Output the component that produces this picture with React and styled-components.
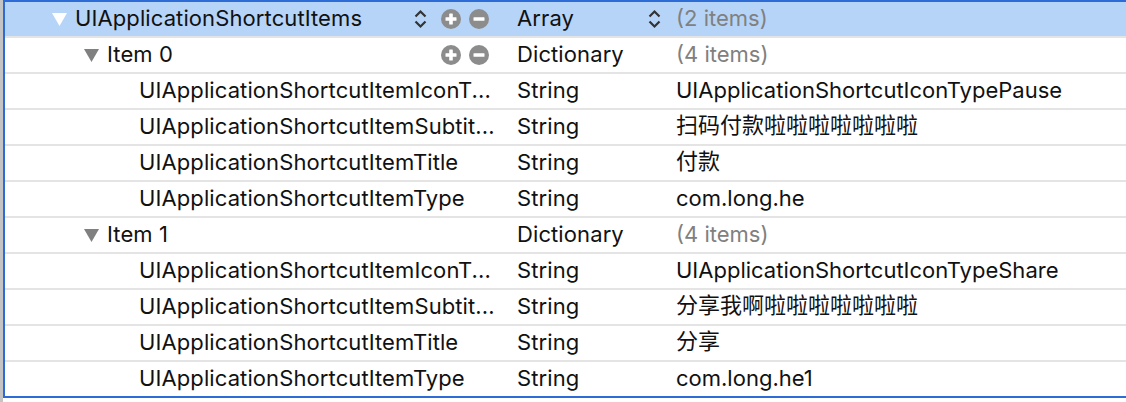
import React from 'react';
import styled, { createGlobalStyle } from 'styled-components';

const rows = [
  { level: 0, open: true, key: 'UIApplicationShortcutItems', type: 'Array', value: '(2 items)', muted: true, selected: true, stepper: true, edit: true },
  { level: 1, open: true, key: 'Item 0', type: 'Dictionary', value: '(4 items)', muted: true, edit: true },
  { level: 2, key: 'UIApplicationShortcutItemIconT...', type: 'String', value: 'UIApplicationShortcutIconTypePause' },
  { level: 2, key: 'UIApplicationShortcutItemSubtit...', type: 'String', value: '扫码付款啦啦啦啦啦啦啦', cjk: true },
  { level: 2, key: 'UIApplicationShortcutItemTitle', type: 'String', value: '付款', cjk: true },
  { level: 2, key: 'UIApplicationShortcutItemType', type: 'String', value: 'com.long.he' },
  { level: 1, open: true, key: 'Item 1', type: 'Dictionary', value: '(4 items)', muted: true },
  { level: 2, key: 'UIApplicationShortcutItemIconT...', type: 'String', value: 'UIApplicationShortcutIconTypeShare' },
  { level: 2, key: 'UIApplicationShortcutItemSubtit...', type: 'String', value: '分享我啊啦啦啦啦啦啦啦', cjk: true },
  { level: 2, key: 'UIApplicationShortcutItemTitle', type: 'String', value: '分享', cjk: true },
  { level: 2, key: 'UIApplicationShortcutItemType', type: 'String', value: 'com.long.he1' },
];

function Disclosure({ light }) {
  return (
    <svg width="15" height="13" viewBox="0 0 15 13">
      <path d="M0 0 H15 L7.5 13 Z" fill={light ? '#ffffff' : '#808080'} />
    </svg>
  );
}

function Stepper() {
  return (
    <svg width="13" height="20" viewBox="0 0 13 20">
      <path d="M1.5 7.5 L6.5 2.5 L11.5 7.5" fill="none" stroke="#333" strokeWidth="2.2" />
      <path d="M1.5 12.5 L6.5 17.5 L11.5 12.5" fill="none" stroke="#333" strokeWidth="2.2" />
    </svg>
  );
}

function RoundButton({ minus }) {
  return (
    <svg width="20" height="20" viewBox="0 0 20 20">
      <circle cx="10" cy="10" r="10" fill="#8c8c8c" />
      <rect x="4.5" y="8.2" width="11" height="3.6" rx="0.6" fill="#fff" />
      {!minus && <rect x="8.2" y="4.5" width="3.6" height="11" rx="0.6" fill="#fff" />}
    </svg>
  );
}

export default function App() {
  return (
    <>
      <GlobalStyle />
      <Page>
        <Strip />
        <Frame>
          {rows.map((r, i) => (
            <Row key={i} selected={r.selected}>
              <KeyCell level={r.level}>
                <Slot>{r.open && <Disclosure light={r.selected} />}</Slot>
                <Label>{r.key}</Label>
                {r.edit && (
                  <Controls>
                    {r.stepper && <StepperWrap><Stepper /></StepperWrap>}
                    <RoundButton />
                    <RoundButton minus />
                  </Controls>
                )}
              </KeyCell>
              <TypeCell>
                <Label>{r.type}</Label>
                {r.stepper && <TypeStepper><Stepper /></TypeStepper>}
              </TypeCell>
              <ValueCell muted={r.muted} cjk={r.cjk}>{r.value}</ValueCell>
            </Row>
          ))}
        </Frame>
      </Page>
    </>
  );
}

//////// style ////////

const GlobalStyle = createGlobalStyle`
  html, body {
    margin: 0;
    background: #ffffff;
    font-family: Inter, "Liberation Sans", "Noto Sans CJK SC", sans-serif;
  }
`;

const Page = styled.div`
  display: flex;
  width: 1126px;
  height: 402px;
  overflow: hidden;
`;

const Strip = styled.div`
  width: 3px;
  background: #c4c4c4;
  flex-shrink: 0;
`;

const Frame = styled.div`
  flex: 1;
  align-self: flex-start;
  border: 2px solid #2d6bd7;
  border-right: none;
  display: flex;
  flex-direction: column;
`;

const Row = styled.div`
  display: grid;
  grid-template-columns: 495px 171px 1fr;
  height: 34px;
  box-sizing: content-box;
  align-items: center;
  background: ${p => (p.selected ? '#b6d4f8' : '#ffffff')};
  font-size: 22px;
  line-height: 26px;
  color: #111;
  & + & {
    border-top: 2px solid #e4e4e4;
  }
`;

const KeyCell = styled.div`
  display: flex;
  align-items: center;
  height: 100%;
  padding-left: ${p => 47 + p.level * 32}px;
  padding-right: 11px;
  min-width: 0;
`;

const Slot = styled.div`
  width: 23px;
  flex-shrink: 0;
  display: flex;
  align-items: center;
  padding-top: 1px;
`;

const Label = styled.span`
  white-space: nowrap;
  letter-spacing: 0.1px;
  margin-top: -2px;
`;

const Controls = styled.div`
  margin-left: auto;
  display: flex;
  align-items: center;
  gap: 8px;
`;

const StepperWrap = styled.div`
  display: flex;
  margin-right: 6px;
`;

const TypeCell = styled.div`
  display: flex;
  align-items: center;
  height: 100%;
  padding-left: 17px;
  padding-right: 10px;
`;

const TypeStepper = styled.div`
  display: flex;
  margin-left: auto;
`;

const ValueCell = styled.div`
  padding-left: 5px;
  white-space: nowrap;
  margin-top: ${p => (p.cjk ? '-5px' : '-2px')};
  color: ${p => (p.muted ? '#808080' : '#111')};
`;
